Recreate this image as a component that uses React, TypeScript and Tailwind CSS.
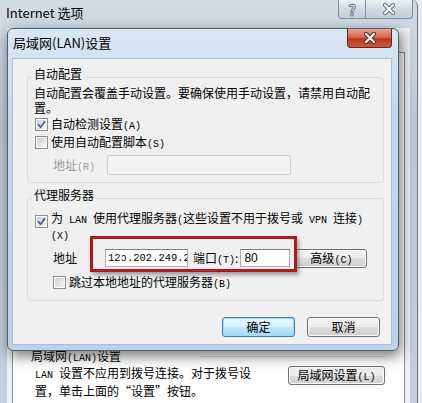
function M({ children }: { children: React.ReactNode }) {
  return <span className="font-['Liberation_Mono',monospace] text-[10px]">{children}</span>;
}

function Check({ on }: { on?: boolean }) {
  return (
    <span className="flex h-[13px] w-[13px] shrink-0 border border-[#8e8f8f] bg-white p-px">
      <span className="flex flex-1 items-center justify-center bg-[linear-gradient(135deg,#c9cdd3,#f7f7f7)]">
        {on && (
          <svg width="9" height="9" viewBox="0 0 9 9">
            <path d="M1 4.3 L3.6 7.2 L8 1.2" fill="none" stroke="#3d5b96" strokeWidth="1.7" />
          </svg>
        )}
      </span>
    </span>
  );
}

function XMark({ fill, edge, size }: { fill: string; edge: string; size: number }) {
  return (
    <svg width={size} height={size} viewBox="0 0 12 12">
      <path d="M2 2 L10 10 M10 2 L2 10" stroke={edge} strokeWidth="4.2" strokeLinecap="round" />
      <path d="M2 2 L10 10 M10 2 L2 10" stroke={fill} strokeWidth="2.2" strokeLinecap="round" />
    </svg>
  );
}

export default function App() {
  return (
    <div className="relative h-[403px] w-[422px] overflow-hidden bg-[#e9edf1] font-['Noto_Sans_CJK_SC',sans-serif] text-[12px] text-black">
      {/* Internet 选项 window */}
      <div className="flex h-full w-[418px] flex-col rounded-tr-[6px] border-r border-[#6b7886] bg-[linear-gradient(#d3dbe3,#bccad8_30%,#c2cfdc)]">
        <div className="flex h-[28px] shrink-0">
          <span className="pl-[6px] pt-[4px] text-[13px] leading-[18px]">Internet 选项</span>
          <div className="ml-auto mr-[4px] flex h-[19px]">
            <span className="flex w-[28px] items-center justify-center rounded-bl-[4px] border border-t-0 border-[#7f8c9a] bg-[linear-gradient(#eef2f5,#d2dae2_50%,#c4ced8)] text-[15px] font-bold leading-none text-white [-webkit-text-stroke:1px_#6a7480]">
              ?
            </span>
            <span className="flex w-[47px] items-center justify-center rounded-br-[4px] border border-l-0 border-t-0 border-[#7f8c9a] bg-[linear-gradient(#eef2f5,#d2dae2_50%,#c4ced8)]">
              <XMark fill="#ffffff" edge="#6a7480" size={12} />
            </span>
          </div>
        </div>
        <div className="ml-[7px] mr-[7px] flex-1 bg-[#f0f0f0] pt-[24px]">
          <div className="ml-[5px] mr-[5px] h-[400px] border border-[#898c95] bg-white pl-[18px] pr-[19px] pt-[297px]">
            <div className="flex h-[14px] items-center leading-[14px]">
              <span className="whitespace-nowrap">
                局域网<M>(LAN)</M>设置
              </span>
              <span className="ml-[79px] h-[2px] flex-1 border-t border-b border-t-[#d5dfe5] border-b-white" />
            </div>
            <div className="flex items-start">
              <div className="mt-[1px] whitespace-nowrap pl-[4px] leading-[15px]">
                <M>LAN </M>设置不应用到拨号连接。对于拨号设
                <br />
                置，单击上面的“设置”按钮。
              </div>
              <button className="ml-auto mt-[2px] h-[19px] w-[97px] rounded-[3px] border border-[#707070] bg-[linear-gradient(#f2f2f2,#ebebeb_50%,#dddddd_50%,#cfcfcf)] leading-[15px] shadow-[inset_0_0_0_1px_#fbfbfb]">
                局域网设置<M>(L)</M>
              </button>
            </div>
          </div>
        </div>
      </div>

      {/* 局域网(LAN)设置 dialog */}
      <div className="absolute left-[7px] top-[28px] flex h-[323px] w-[392px] flex-col rounded-[6px] border border-[#4f5e6d] bg-[linear-gradient(#dae8f5,#c4d9ee_25%,#bdd3ea)] shadow-[2px_5px_14px_rgba(0,0,0,0.55)]">
        <div className="flex h-[29px] shrink-0">
          <span className="self-center pl-[5px] pb-[1px] text-[13px]">局域网(LAN)设置</span>
          <span className="ml-auto mr-[6px] flex h-[19px] w-[45px] items-center justify-center rounded-b-[4px] border border-t-0 border-[#6d2218] bg-[linear-gradient(#eaa495,#d6674f_45%,#bb3620_55%,#cf5a3c)]">
            <XMark fill="#ffffff" edge="#5a2a24" size={12} />
          </span>
        </div>
        <div className="mb-[5px] ml-[4px] mr-[6px] flex flex-1 flex-col border border-[#a9bdd2] bg-[#f0f0f0]">
          <fieldset className="ml-[14px] mr-[7px] mt-[8px] rounded-[3px] border border-[#d5dfe5] pb-[7px] pl-[6px] pr-[6px]">
            <legend className="-ml-[2px] px-[2px] pb-[6px] leading-[14px]">自动配置</legend>
            <p className="-mt-[2px] w-[336px] leading-[15px]">
              自动配置会覆盖手动设置。要确保使用手动设置，请禁用自动配置。
            </p>
            <div className="ml-px mt-[1px] flex h-[16px] items-center gap-[3px]">
              <Check on />
              <span>
                自动检测设置<M>(A)</M>
              </span>
            </div>
            <div className="ml-px mt-[2px] flex h-[16px] items-center gap-[3px]">
              <Check />
              <span>
                使用自动配置脚本<M>(S)</M>
              </span>
            </div>
            <div className="mt-[5px] flex h-[20px] items-center">
              <span className="ml-[19px] w-[54px] text-[#a0a0a0]">
                地址<M>(R)</M>
              </span>
              <span className="h-[20px] w-[184px] rounded-[2px] border border-[#cdcdcd] bg-[#f4f4f4]" />
            </div>
          </fieldset>

          <fieldset className="ml-[14px] mr-[7px] mt-[5px] rounded-[3px] border border-[#d5dfe5] pb-[10px] pl-[6px] pr-[6px]">
            <legend className="-ml-[2px] px-[2px] pb-[6px] leading-[14px]">代理服务器</legend>
            <div className="ml-px mt-[3px] flex gap-[3px]">
              <span className="mt-[4px]">
                <Check on />
              </span>
              <div className="whitespace-nowrap leading-[13px]">
                为<M> LAN </M>使用代理服务器<M>(</M>这些设置不用于拨号或<M> VPN </M>连接<M>)</M>
                <br />
                <M>(X)</M>
              </div>
            </div>
            <div className="relative mt-[5px] flex h-[20px] items-center">
              <span className="ml-[19px] w-[52px] shrink-0">地址</span>
              <span className="h-[18px] w-[83px] shrink-0 overflow-hidden whitespace-nowrap border border-[#abadb3] border-t-[#7a7d86] bg-white pl-[2px] font-['Liberation_Mono',monospace] text-[10.5px] leading-[16px]">
                12ↄ.202.249.28
              </span>
              <span className="ml-[5px] shrink-0 whitespace-nowrap">
                端口<M>(T)</M>:
              </span>
              <span className="ml-[2px] h-[18px] w-[50px] shrink-0 border border-[#abadb3] border-t-[#7a7d86] bg-white pl-[3px] font-['Liberation_Sans',sans-serif] text-[12px] leading-[16px]">
                80
              </span>
              <button className="ml-[5px] h-[19px] w-[72px] shrink-0 rounded-[3px] border border-[#707070] bg-[linear-gradient(#f2f2f2,#ebebeb_50%,#dddddd_50%,#cfcfcf)] leading-[15px] shadow-[inset_0_0_0_1px_#fbfbfb]">
                高级<M>(C)</M>
              </button>
              <span className="pointer-events-none absolute -top-[12px] left-[56px] h-[36px] w-[207px] border-[3px] border-[#b0181e] shadow-[2px_3px_4px_rgba(0,0,0,0.35)]" />
            </div>
            <div className="ml-[19px] mt-[6px] flex h-[16px] items-center gap-[3px]">
              <Check />
              <span>
                跳过本地地址的代理服务器<M>(B)</M>
              </span>
            </div>
          </fieldset>

          <div className="mr-[11px] mt-[16px] flex justify-end gap-[12px]">
            <button className="h-[20px] w-[73px] rounded-[3px] border border-[#3c7fb1] bg-[linear-gradient(#eaf6fd,#d9f0fc_50%,#bee6fd_50%,#a7d9f5)] leading-[16px] shadow-[inset_0_0_0_1px_#9edcfb]">
              确定
            </button>
            <button className="h-[20px] w-[73px] rounded-[3px] border border-[#707070] bg-[linear-gradient(#f2f2f2,#ebebeb_50%,#dddddd_50%,#cfcfcf)] leading-[16px] shadow-[inset_0_0_0_1px_#fbfbfb]">
              取消
            </button>
          </div>
        </div>
      </div>
    </div>
  );
}
